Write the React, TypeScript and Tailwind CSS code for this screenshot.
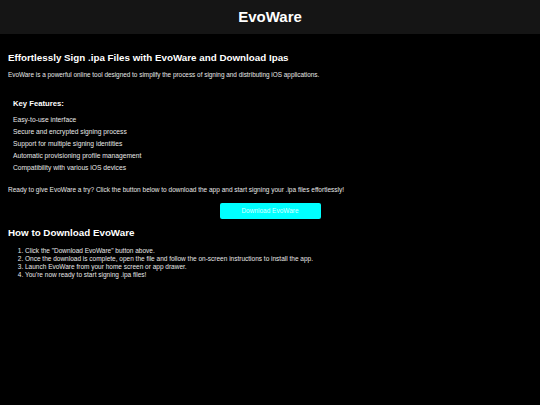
const features = [
  'Easy-to-use interface',
  'Secure and encrypted signing process',
  'Support for multiple signing identities',
  'Automatic provisioning profile management',
  'Compatibility with various iOS devices',
];

const steps = [
  'Click the "Download EvoWare" button above.',
  'Once the download is complete, open the file and follow the on-screen instructions to install the app.',
  'Launch EvoWare from your home screen or app drawer.',
  "You're now ready to start signing .ipa files!",
];

export default function App() {
  return (
    <div className="min-h-[405px] bg-black text-[#e8e8e8] font-['Liberation_Sans',Arial,sans-serif]">
      <header className="h-[34px] bg-[#151515] flex items-center justify-center">
        <h1 className="text-[15px] font-bold text-white">EvoWare</h1>
      </header>

      <main className="px-[8px]">
        <h2 className="pt-[17px] text-[9.8px] font-bold text-white leading-[14px]">
          Effortlessly Sign .ipa Files with EvoWare and Download Ipas
        </h2>
        <p className="mt-[6px] text-[6.4px] leading-[8px]">
          EvoWare is a powerful online tool designed to simplify the process of signing and
          distributing iOS applications.
        </p>

        <section className="mt-[20px] px-[5px]">
          <h3 className="text-[7.7px] font-bold text-white leading-[10px]">Key Features:</h3>
          <ul className="mt-[7px] flex flex-col gap-[4px]">
            {features.map((f) => (
              <li key={f} className="text-[6.7px] leading-[8px]">
                {f}
              </li>
            ))}
          </ul>
        </section>

        <p className="mt-[14px] text-[6.5px] leading-[8px]">
          Ready to give EvoWare a try? Click the button below to download the app and start signing
          your .ipa files effortlessly!
        </p>

        <div className="mt-[9px] flex justify-center">
          <button className="w-[101px] h-[16px] rounded-[2px] bg-[#00ffff] text-[6.5px] text-[#d8ffff]">
            Download EvoWare
          </button>
        </div>

        <h2 className="mt-[7px] text-[9.8px] font-bold text-white leading-[14px]">
          How to Download EvoWare
        </h2>
        <ol className="mt-[7px] pl-[17px] list-decimal text-[6.5px] leading-[8px]">
          {steps.map((s) => (
            <li key={s}>{s}</li>
          ))}
        </ol>
      </main>
    </div>
  );
}
